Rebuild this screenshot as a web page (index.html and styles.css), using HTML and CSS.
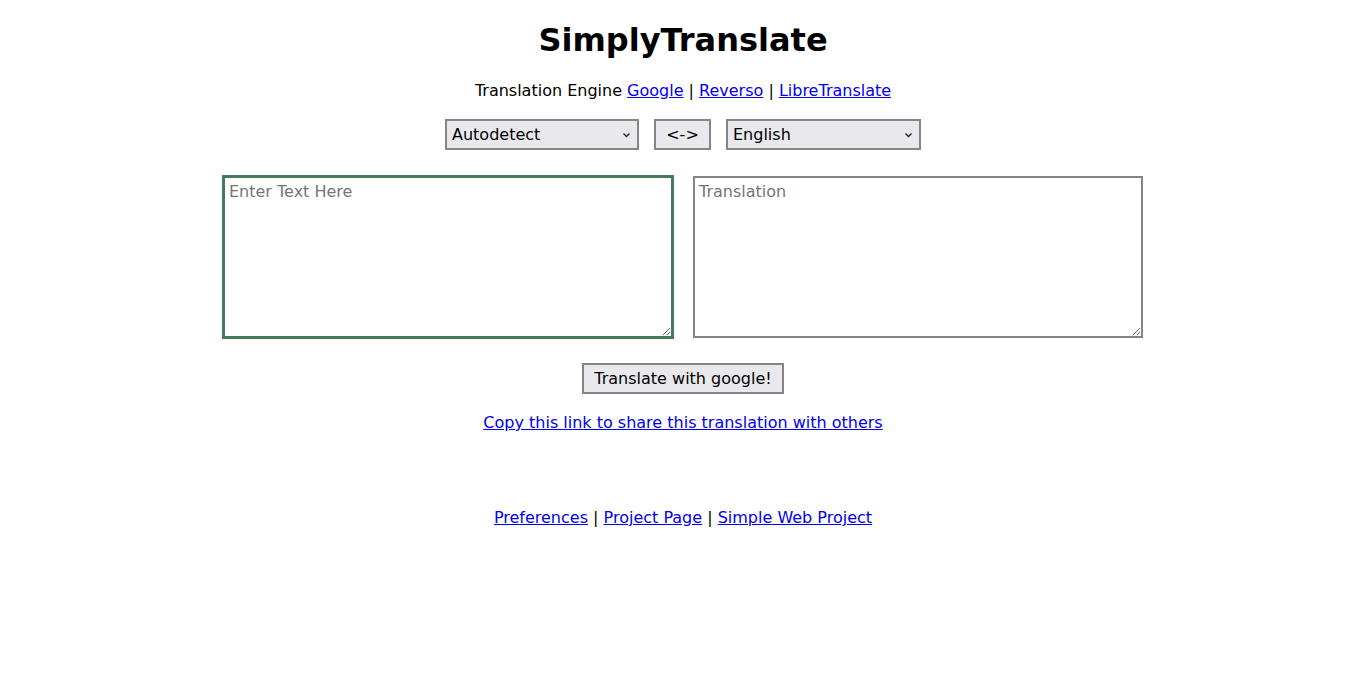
FILE: index.html
```html
<!DOCTYPE html>
<html lang="en">
<head>
<meta charset="utf-8">
<title>SimplyTranslate</title>
<link rel="stylesheet" href="styles.css">
</head>
<body>
<main class="page">
  <h1 class="title">SimplyTranslate</h1>
  <p class="engines">Translation Engine <a href="#">Google</a> | <a href="#">Reverso</a> | <a href="#">LibreTranslate</a></p>
  <form class="form">
    <div class="lang-row">
      <select class="ctl select select-from"><option>Autodetect</option></select>
      <button type="button" class="ctl swap">&lt;-&gt;</button>
      <select class="ctl select select-to"><option>English</option></select>
    </div>
    <div class="text-row">
      <textarea class="box box-focus" placeholder="Enter Text Here"></textarea>
      <textarea class="box" placeholder="Translation" readonly></textarea>
    </div>
    <button type="button" class="ctl submit">Translate with google!</button>
  </form>
  <p class="share"><a href="#">Copy this link to share this translation with others</a></p>
  <footer class="footer"><a href="#">Preferences</a> | <a href="#">Project Page</a> | <a href="#">Simple Web Project</a></footer>
</main>
</body>
</html>
```
FILE: styles.css
```css
html, body {
  background: #ffffff;
}
body {
  margin: 8px;
  font-family: "DejaVu Sans", sans-serif;
  font-size: 16px;
  color: #000000;
}
.page {
  text-align: center;
}
a {
  color: #0000ee;
  text-decoration: underline;
}
.title {
  font-size: 32px;
  font-weight: bold;
  margin: 14px 0 0 0;
  line-height: 37px;
}
.engines {
  margin: 22px 0 0 0;
  line-height: 19px;
}
.form {
  display: flex;
  flex-direction: column;
  align-items: center;
}
.lang-row {
  display: flex;
  justify-content: center;
  gap: 15px;
  margin-top: 19px;
}
.ctl {
  font-family: "DejaVu Sans", sans-serif;
  font-size: 16px;
  color: #000000;
  background-color: #e9e9ed;
  border: 2px solid #858585;
  border-radius: 0;
  height: 31px;
  box-sizing: border-box;
  margin: 0;
}
.select {
  -webkit-appearance: none;
  appearance: none;
  text-align: left;
  padding: 0 20px 0 5px;
  background-image: url("data:image/svg+xml;utf8,<svg xmlns='http://www.w3.org/2000/svg' width='9' height='6' viewBox='0 0 9 6'><path d='M1.5 1.5 L4.5 4.5 L7.5 1.5' fill='none' stroke='%23222' stroke-width='1.4'/></svg>");
  background-repeat: no-repeat;
  background-position: right 6px center;
}
.select-from {
  width: 194px;
}
.select-to {
  width: 195px;
}
.swap {
  width: 57px;
  padding: 0;
}
.text-row {
  display: flex;
  justify-content: center;
  gap: 20px;
  margin-top: 26px;
}
.box {
  width: 450px;
  height: 162px;
  box-sizing: border-box;
  border: 2px solid #858585;
  padding: 4px;
  margin: 0;
  font-family: "DejaVu Sans", sans-serif;
  font-size: 16px;
  line-height: 19px;
  resize: both;
  outline: none;
}
.box::placeholder {
  color: #757575;
}
.box-focus {
  border-color: #437b5b;
  outline: 1px solid #437b5b;
}
.submit {
  margin-top: 25px;
  padding: 0 10px;
  width: 202px;
}
.share {
  margin: 19px 0 0 0;
  line-height: 19px;
}
.footer {
  margin-top: 76px;
  line-height: 19px;
}
```
